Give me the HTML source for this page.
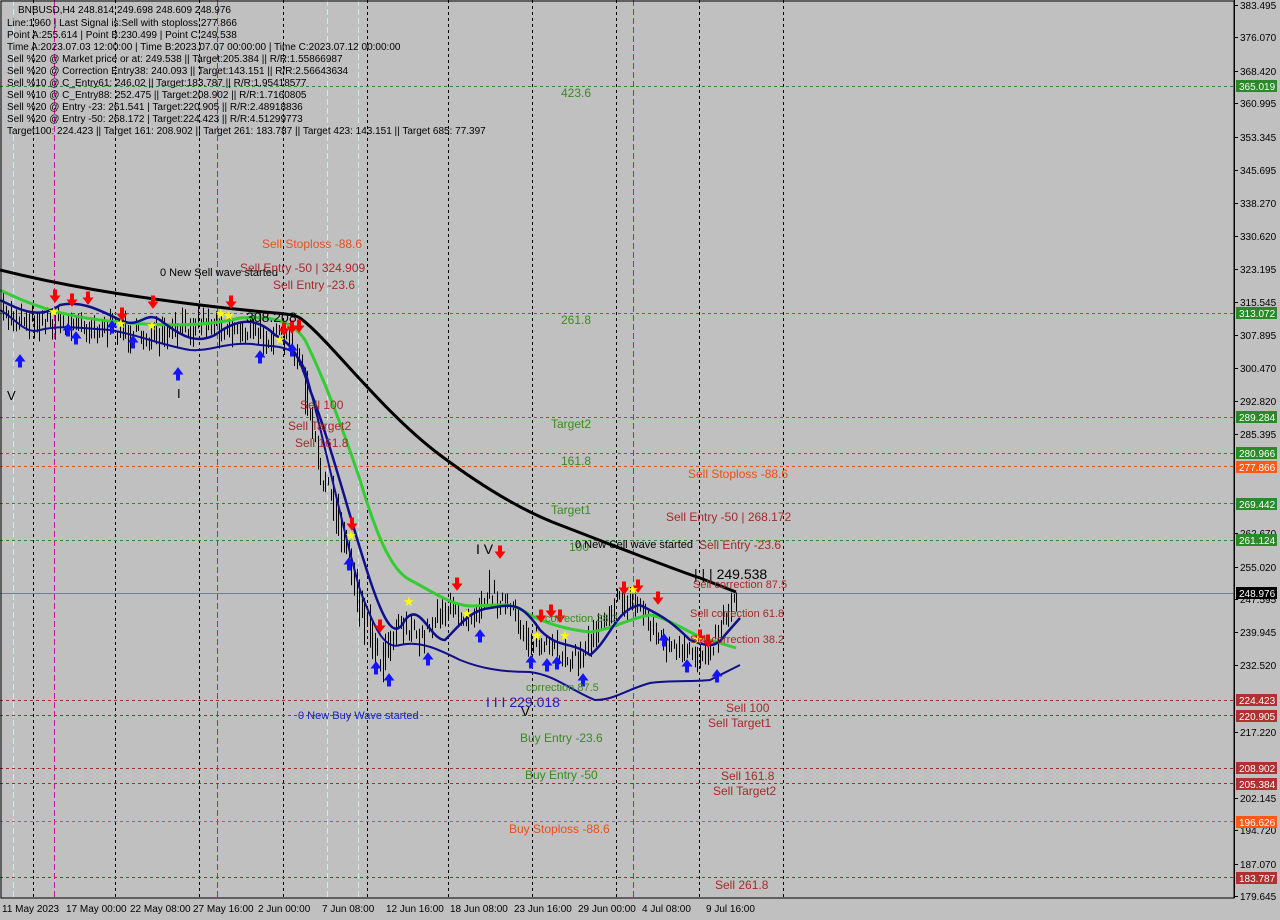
<!DOCTYPE html>
<html><head><meta charset="utf-8"><style>
body{margin:0;background:#c0c0c0;width:1280px;height:920px;overflow:hidden;font-family:"Liberation Sans",sans-serif}
svg{position:absolute;left:0;top:0}
.t{font-size:10px;fill:#000}
.ax{font-size:10px;fill:#000}
</style></head><body>
<svg id="s" width="1280" height="920" xmlns="http://www.w3.org/2000/svg">
<rect width="1280" height="920" fill="#c0c0c0"/>
<g id="grid" stroke="#000" stroke-dasharray="3,3" stroke-width="1">
<line x1="33.5" y1="0" x2="33.5" y2="898"/><line x1="115.5" y1="0" x2="115.5" y2="898"/><line x1="199.5" y1="0" x2="199.5" y2="898"/><line x1="283.5" y1="0" x2="283.5" y2="898"/><line x1="367.5" y1="0" x2="367.5" y2="898"/><line x1="448.5" y1="0" x2="448.5" y2="898"/><line x1="532.5" y1="0" x2="532.5" y2="898"/><line x1="616.5" y1="0" x2="616.5" y2="898"/><line x1="699.5" y1="0" x2="699.5" y2="898"/><line x1="783.5" y1="0" x2="783.5" y2="898"/>
</g>
<g stroke-dasharray="6,3" stroke-width="1">
<line x1="54.5" y1="0" x2="54.5" y2="898" stroke="#c0189a"/><line x1="217.5" y1="0" x2="217.5" y2="898" stroke="#c0189a"/><line x1="633.5" y1="0" x2="633.5" y2="898" stroke="#c0189a"/>
<line x1="13.5" y1="0" x2="13.5" y2="898" stroke="#c8eef0"/><line x1="327.5" y1="0" x2="327.5" y2="898" stroke="#c8eef0"/><line x1="358.5" y1="0" x2="358.5" y2="898" stroke="#c8eef0"/>
</g>
<g stroke-dasharray="3,3" stroke-width="1">
<line x1="0" y1="86.5" x2="1234" y2="86.5" stroke="#2a8a2a"/>
<line x1="0" y1="313.5" x2="1234" y2="313.5" stroke="#2a8a2a"/>
<line x1="0" y1="417.5" x2="1234" y2="417.5" stroke="#2a8a2a"/>
<line x1="0" y1="453.5" x2="1234" y2="453.5" stroke="#2a8a2a"/>
<line x1="0" y1="466.5" x2="1234" y2="466.5" stroke="#e8501a"/>
<line x1="0" y1="503.5" x2="1234" y2="503.5" stroke="#2a8a2a"/>
<line x1="0" y1="540.5" x2="1234" y2="540.5" stroke="#2a8a2a"/>
<line x1="0" y1="700.5" x2="1234" y2="700.5" stroke="#a52a2a"/>
<line x1="0" y1="715.5" x2="1234" y2="715.5" stroke="#a52a2a"/>
<line x1="0" y1="768.5" x2="1234" y2="768.5" stroke="#a52a2a"/>
<line x1="0" y1="783.5" x2="1234" y2="783.5" stroke="#a52a2a"/>
<line x1="0" y1="821.5" x2="1234" y2="821.5" stroke="#e8501a"/>
<line x1="0" y1="877.5" x2="1234" y2="877.5" stroke="#a52a2a"/>
</g>
<line x1="0" y1="593.5" x2="1234" y2="593.5" stroke="#708090"/>
<g id="bars" stroke="#000" stroke-width="1"></g>
<path fill="none" stroke="#000" stroke-width="3" d="M0,270 C60,285 120,295 200,305 S290,312 300,318 C330,340 380,410 440,455 C480,485 520,510 560,525 C620,548 670,568 700,578 L736,592"/>
<path fill="none" stroke="#33cc33" stroke-width="3" d="M0,290 C30,305 60,315 100,320 C150,326 200,328 240,318 C280,315 295,325 305,340 C320,370 340,420 360,480 C375,530 390,570 410,580 C430,590 450,605 470,606 C500,606 510,600 530,615 C550,625 570,630 590,632 C610,630 630,618 650,615 C670,618 690,635 710,640 L736,648"/>
<path fill="none" stroke="#10108a" stroke-width="2.5" d="M0,300 C20,310 40,320 60,305 C80,300 100,310 120,320 C140,330 145,310 160,320 C180,335 195,345 215,335 C235,320 255,315 275,335 C295,345 300,360 310,390 C330,440 350,520 370,580 C385,625 395,640 405,620 C420,600 430,640 445,640 C460,625 470,610 490,608 C510,605 520,600 540,630 C560,650 570,640 590,655 C610,640 615,610 640,605 C660,615 670,620 690,640 C705,645 715,650 725,635 L740,618"/>
<path fill="none" stroke="#10108a" stroke-width="2" d="M0,310 C15,318 25,335 40,330 C60,325 80,328 110,330 C140,335 160,345 190,350 C210,352 230,340 260,345 C280,347 295,345 305,370 C320,420 340,520 360,590 C375,630 385,650 400,645 C420,640 440,650 460,660 C480,668 500,672 530,672 C555,675 570,690 595,700 C615,700 625,690 650,683 C670,680 690,682 710,680 L740,665"/>
<g id="marks"></g>
<g font-size="12">
<text x="262" y="248" fill="#e8501a">Sell Stoploss -88.6</text>
<text x="160" y="276" fill="#000" font-size="11">0 New Sell wave started</text>
<text x="240" y="272" fill="#a52a2a">Sell Entry -50 | 324.909</text>
<text x="273" y="289" fill="#a52a2a">Sell Entry -23.6</text>
<text x="246" y="322" fill="#000" font-size="14">308.208</text>
<text x="300" y="409" fill="#a52a2a">Sell 100</text>
<text x="288" y="430" fill="#a52a2a">Sell Target2</text>
<text x="295" y="447" fill="#a52a2a">Sell 161.8</text>
<text x="561" y="97" fill="#3a8a1e">423.6</text>
<text x="561" y="324" fill="#3a8a1e">261.8</text>
<text x="551" y="428" fill="#3a8a1e">Target2</text>
<text x="561" y="465" fill="#3a8a1e">161.8</text>
<text x="551" y="514" fill="#3a8a1e">Target1</text>
<text x="569" y="551" fill="#3a8a1e">100</text>
<text x="575" y="548" fill="#000" font-size="11">0 New Sell wave started</text>
<text x="688" y="478" fill="#e8501a">Sell Stoploss -88.6</text>
<text x="666" y="521" fill="#a52a2a">Sell Entry -50 | 268.172</text>
<text x="699" y="549" fill="#a52a2a">Sell Entry -23.6</text>
<text x="694" y="579" fill="#000" font-size="14">| | | 249.538</text>
<text x="693" y="588" fill="#a52a2a" font-size="11">Sell correction 87.5</text>
<text x="690" y="617" fill="#a52a2a" font-size="11">Sell correction 61.8</text>
<text x="690" y="643" fill="#a52a2a" font-size="11">Sell correction 38.2</text>
<text x="726" y="712" fill="#a52a2a">Sell 100</text>
<text x="708" y="727" fill="#a52a2a">Sell Target1</text>
<text x="721" y="780" fill="#a52a2a">Sell 161.8</text>
<text x="713" y="795" fill="#a52a2a">Sell Target2</text>
<text x="715" y="889" fill="#a52a2a">Sell  261.8</text>
<text x="476" y="554" fill="#000" font-size="14">I V</text>
<text x="545" y="622" fill="#3a8a1e" font-size="11">correction 38.2</text>
<text x="526" y="691" fill="#3a8a1e" font-size="11">correction 87.5</text>
<text x="486" y="707" fill="#2020c0" font-size="14">I I I 229.018</text>
<text x="521" y="716" fill="#000" font-size="13">V</text>
<text x="298" y="719" fill="#2020c0" font-size="11">0 New Buy Wave started</text>
<text x="520" y="742" fill="#3a8a1e">Buy Entry -23.6</text>
<text x="525" y="779" fill="#3a8a1e">Buy Entry -50</text>
<text x="509" y="833" fill="#e8501a">Buy Stoploss -88.6</text>
<text x="7" y="400" fill="#000" font-size="13">V</text>
<text x="177" y="398" fill="#000" font-size="13">I</text>
</g>
<g class="t">
<text x="18" y="13">BNBUSD,H4  248.814 249.698 248.609 248.976</text>
<text x="7" y="26">Line:1960 | Last Signal is:Sell with stoploss:277.866</text>
<text x="7" y="38">Point A:255.614 | Point B:230.499 | Point C:249.538</text>
<text x="7" y="50">Time A:2023.07.03 12:00:00 | Time B:2023.07.07 00:00:00 | Time C:2023.07.12 00:00:00</text>
<text x="7" y="62">Sell %20 @ Market price or at: 249.538 || Target:205.384 || R/R:1.55866987</text>
<text x="7" y="74">Sell %20 @ Correction Entry38: 240.093 || Target:143.151 || R/R:2.56643634</text>
<text x="7" y="86">Sell %10 @ C_Entry61: 246.02 || Target:183.787 || R/R:1.95418577</text>
<text x="7" y="98">Sell %10 @ C_Entry88: 252.475 || Target:208.902 || R/R:1.7160805</text>
<text x="7" y="110">Sell %20 @ Entry -23: 261.541 | Target:220.905 || R/R:2.48918836</text>
<text x="7" y="122">Sell %20 @ Entry -50: 268.172 | Target:224.423 || R/R:4.51299773</text>
<text x="7" y="134">Target100: 224.423 || Target 161: 208.902 || Target 261: 183.787 || Target 423: 143.151 || Target 685: 77.397</text>
</g>
<rect x="1" y="1" width="1233" height="897" fill="none" stroke="#000"/>
<line x1="1234.5" y1="0" x2="1234.5" y2="898" stroke="#000"/>
<g id="ax" class="ax"></g>
<g class="ax">
<text x="2" y="912">11 May 2023</text><text x="66" y="912">17 May 00:00</text><text x="130" y="912">22 May 08:00</text><text x="193" y="912">27 May 16:00</text><text x="258" y="912">2 Jun 00:00</text><text x="322" y="912">7 Jun 08:00</text><text x="386" y="912">12 Jun 16:00</text><text x="450" y="912">18 Jun 08:00</text><text x="514" y="912">23 Jun 16:00</text><text x="578" y="912">29 Jun 00:00</text><text x="642" y="912">4 Jul 08:00</text><text x="706" y="912">9 Jul 16:00</text>
</g>
</svg>
<script>
var NS="http://www.w3.org/2000/svg",s=document.getElementById('s');
function el(p,t,a){var e=document.createElementNS(NS,t);for(var k in a)e.setAttribute(k,a[k]);p.appendChild(e);return e}
function Y(p){return 5+(383.495-p)*4.371}
var ax=document.getElementById('ax');
[383.495,376.070,368.420,360.995,353.345,345.695,338.270,330.620,323.195,315.545,307.895,300.470,292.820,285.395,262.670,255.020,247.595,239.945,232.520,217.220,202.145,194.720,187.070,179.645].forEach(function(p){var y=Math.round(Y(p));el(ax,'line',{x1:1234,y1:y+.5,x2:1238,y2:y+.5,stroke:'#000'});var t=el(ax,'text',{x:1240,y:y+4});t.textContent=p.toFixed(3)});
[[365.019,'#2a8a2a'],[313.072,'#2a8a2a'],[289.284,'#2a8a2a'],[280.966,'#2a8a2a'],[277.866,'#ff5a14'],[269.442,'#2a8a2a'],[261.124,'#2a8a2a'],[248.976,'#000'],[224.423,'#b03030'],[220.905,'#b03030'],[208.902,'#b03030'],[205.384,'#b03030'],[196.626,'#ff5a14'],[183.787,'#b03030']].forEach(function(a){var y=Math.round(Y(a[0]));el(ax,'rect',{x:1236,y:y-6,width:41,height:12,fill:a[1]});var t=el(ax,'text',{x:1239,y:y+4,fill:'#fff'});t.textContent=a[0].toFixed(3)});
// bars
var pts=[[0,315],[40,320],[80,325],[120,330],[160,340],[200,320],[240,330],[290,340],[300,360],[320,470],[340,520],[360,600],[380,660],[400,620],[420,640],[440,610],[470,615],[490,590],[510,610],[530,640],[550,650],[580,660],[600,620],[620,600],[640,605],[660,640],[680,655],[700,655],[715,640],[725,615],[738,595]];
function py(x){for(var i=0;i<pts.length-1;i++){if(x>=pts[i][0]&&x<=pts[i+1][0]){var f=(x-pts[i][0])/(pts[i+1][0]-pts[i][0]);return pts[i][1]+f*(pts[i+1][1]-pts[i][1])}}return 595}
var seed=7;function r(){seed=(seed*16807)%2147483647;return seed/2147483647}
var g=document.getElementById('bars');
for(var x=3;x<738;x+=2.6){var c=py(x)+(r()-0.5)*18,h=8+r()*(x>300&&x<400?40:22);el(g,'line',{x1:Math.round(x)+.5,y1:c-h/2,x2:Math.round(x)+.5,y2:c+h/2})}
var m=document.getElementById('marks');
function down(x,y){el(m,'path',{d:'M'+(x-1.5)+','+(y-10)+'h3v6h3l-4.5,6l-4.5,-6h3z',fill:'#f00',stroke:'#f00','stroke-width':1})}
function up(x,y){el(m,'path',{d:'M'+(x-1.5)+','+(y+10)+'h3v-6h3l-4.5,-6l-4.5,6h3z',fill:'#1414ff',stroke:'#1414ff','stroke-width':1})}
function star(x,y){el(m,'text',{x:x-5,y:y+4,fill:'#ffff00','font-size':13}).textContent='★'}
[[55,300],[72,304],[88,302],[122,318],[153,306],[231,306],[284,333],[292,331],[299,330],[352,528],[380,630],[457,588],[500,556],[541,620],[551,615],[560,620],[624,592],[638,590],[658,602],[700,640],[708,645]].forEach(function(a){down(a[0],a[1])});
[[20,357],[68,326],[76,334],[112,323],[133,338],[178,370],[260,353],[292,346],[349,560],[376,664],[389,676],[428,655],[480,632],[531,658],[547,661],[557,659],[583,676],[664,636],[687,662],[717,672]].forEach(function(a){up(a[0],a[1])});
[[53,312],[120,324],[151,326],[220,314],[228,316],[279,340],[350,536],[408,602],[466,614],[536,636],[564,636],[632,590],[697,640]].forEach(function(a){star(a[0],a[1])});
</script>
</body></html>
